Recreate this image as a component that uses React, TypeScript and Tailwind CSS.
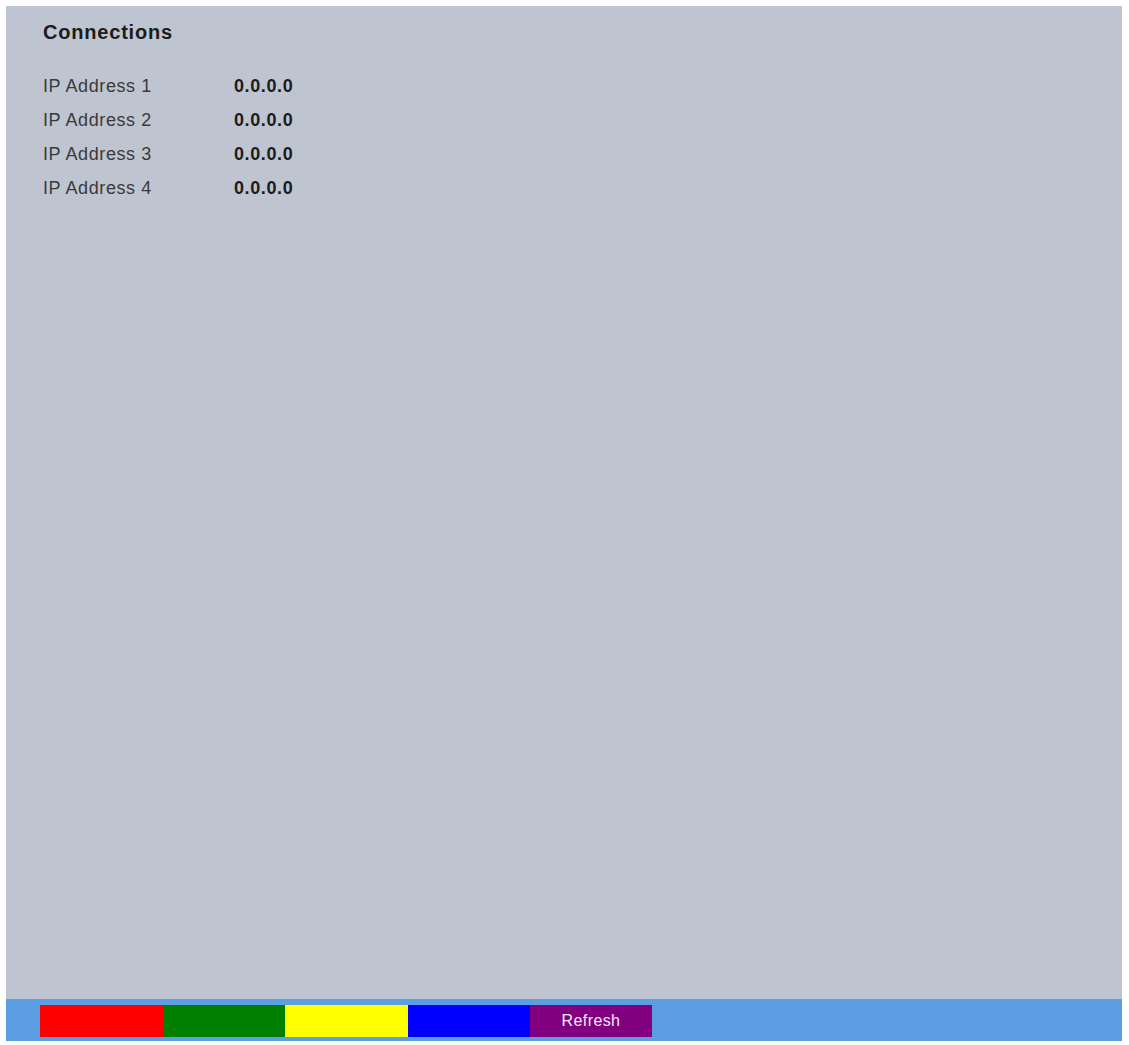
const rows = [
  { label: "IP Address 1", value: "0.0.0.0" },
  { label: "IP Address 2", value: "0.0.0.0" },
  { label: "IP Address 3", value: "0.0.0.0" },
  { label: "IP Address 4", value: "0.0.0.0" },
];

export default function App() {
  return (
    <div className="min-h-[1045px] bg-white pt-[6px] pb-[4px] pl-[6px] pr-[7px] font-['Liberation_Sans',Arial,sans-serif]">
      <div className="flex h-[1035px] flex-col bg-[#bec5d0]">
        <div className="flex-1 pl-[37px] pt-[14px]">
          <h1 className="text-[20px] font-bold leading-[24px] tracking-[0.8px] text-[#1c1c1c]">Connections</h1>
          <div className="mt-[25px] flex flex-col">
            {rows.map((r) => (
              <div key={r.label} className="flex h-[34px] items-center text-[18px] tracking-[0.6px]">
                <span className="w-[191px] text-[#3a3a3a]">{r.label}</span>
                <span className="font-bold text-[#1c1c1c]">{r.value}</span>
              </div>
            ))}
          </div>
        </div>
        <div className="flex h-[42px] items-start bg-[#5b9ee1] pl-[34px] pt-[6px]">
          <div className="flex h-[32px]">
            <div className="w-[123px] bg-[#ff0000]" />
            <div className="w-[122px] bg-[#008000]" />
            <div className="w-[123px] bg-[#ffff00]" />
            <div className="w-[122px] bg-[#0000ff]" />
            <button className="flex w-[122px] items-center justify-center bg-[#800080] text-[16px] font-medium tracking-[0.4px] text-[#f4e8f4]">
              Refresh
            </button>
          </div>
        </div>
      </div>
    </div>
  );
}
